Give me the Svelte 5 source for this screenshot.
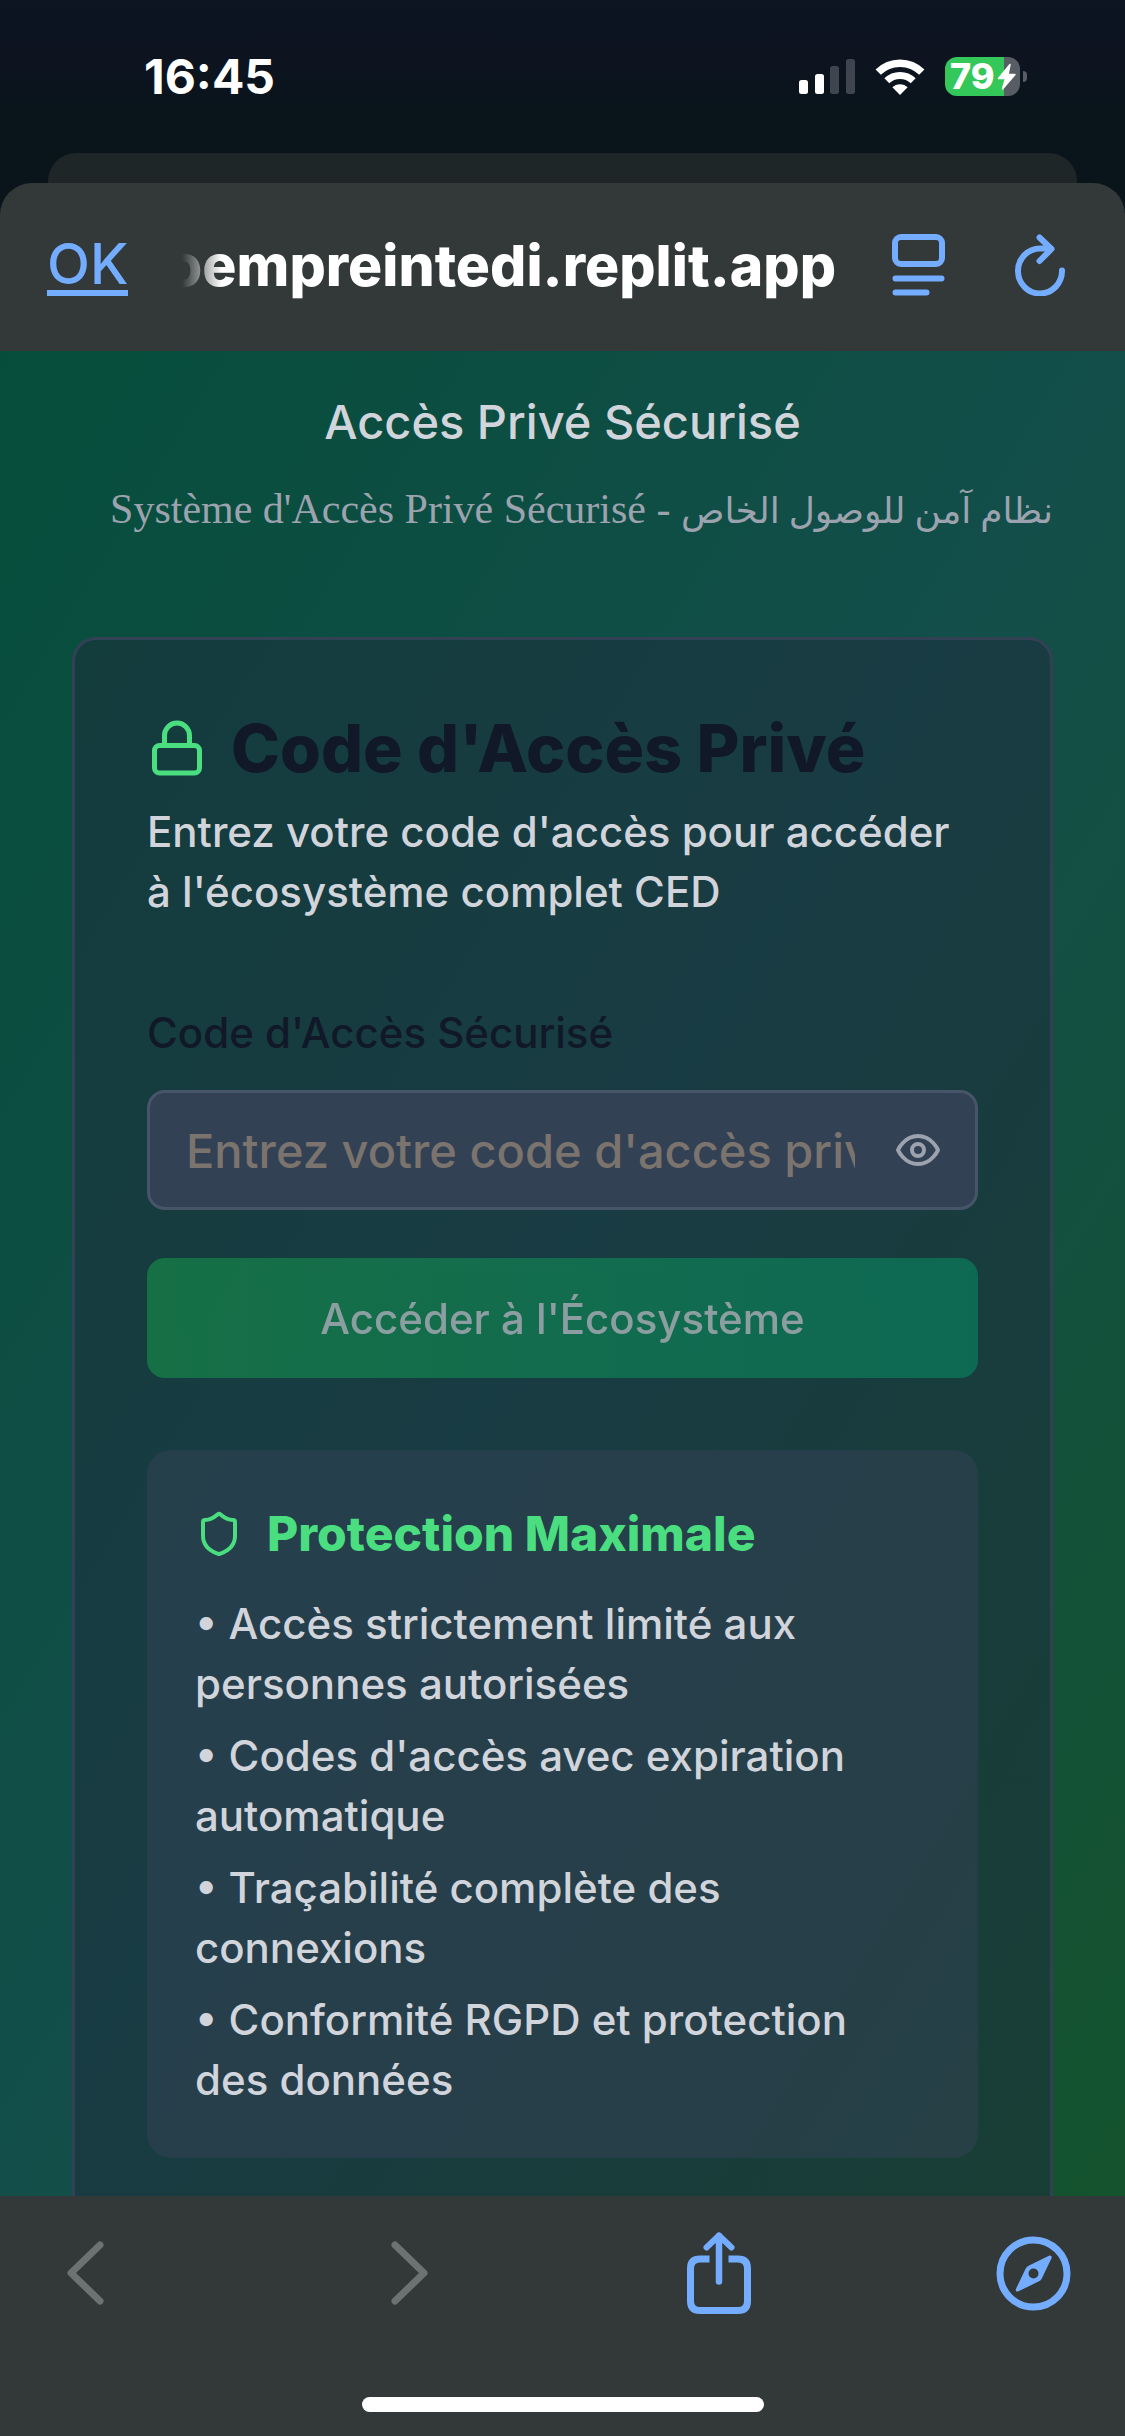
<script>
  const protections = [
    'Accès strictement limité aux personnes autorisées',
    "Codes d'accès avec expiration automatique",
    'Traçabilité complète des connexions',
    'Conformité RGPD et protection des données'
  ];

  let code = $state('');
  let visible = $state(true);
</script>

<div class="screen">
  <header class="status">
    <time class="clock">16:45</time>
    <div class="indicators">
      <svg class="signal" width="56" height="36" viewBox="0 0 56 36" aria-hidden="true">
        <rect x="0" y="21" width="9" height="14" rx="2.5" fill="#fff" />
        <rect x="16" y="15" width="9" height="20" rx="2.5" fill="#fff" />
        <rect x="31" y="7" width="9" height="28" rx="2.5" fill="#3f454e" />
        <rect x="47" y="0" width="9" height="35" rx="2.5" fill="#3f454e" />
      </svg>
      <svg class="wifi" width="50" height="36" viewBox="0 0 50 36" fill="none" aria-hidden="true">
        <path d="M3.2 13.2a31 31 0 0 1 43.6 0" stroke="#fff" stroke-width="7.5" />
        <path d="M11.8 21.8a18.8 18.8 0 0 1 26.4 0" stroke="#fff" stroke-width="7" />
        <path d="M25 36 17.4 28.3a10.8 10.8 0 0 1 15.2 0Z" fill="#fff" />
      </svg>
      <div class="battery">
        <span class="level">79</span>
        <svg class="bolt" width="20" height="28" viewBox="0 0 20 28" aria-hidden="true">
          <path d="M13 1.500 1.500 15.500H8.500L5.500 26 18 11.500H11Z" fill="#fff" stroke="#fff" stroke-width="1.500" stroke-linejoin="round" />
        </svg>
        <span class="nub"></span>
      </div>
    </div>
  </header>

  <div class="sheet-behind"></div>

  <div class="sheet">
    <nav class="address" aria-label="Barre d'adresse">
      <button class="ok" type="button">OK</button>
      <div class="url"><span>oempreintedi.replit.app</span></div>
      <button class="icon reader" type="button" aria-label="Format de page">
        <svg width="54" height="62" viewBox="0 0 54 62" fill="none" stroke="currentColor" stroke-width="6" stroke-linecap="round">
          <rect x="3" y="3" width="47" height="27" rx="6" />
          <path d="M3.500 44.500h46M3.500 58.500h31" />
        </svg>
      </button>
      <button class="icon" type="button" aria-label="Actualiser">
        <svg width="52" height="62" viewBox="0 0 52 62" fill="none" stroke="currentColor" stroke-width="6" stroke-linecap="round" stroke-linejoin="round">
          <path d="M48 36.500A22 22.500 0 1 1 26 14.500H36" />
          <path d="M25.500 3.500 37.500 15 25.500 27" />
        </svg>
      </button>
    </nav>

    <main class="page">
      <h1>Accès Privé Sécurisé</h1>
      <p class="bilingual" dir="rtl"><span class="arabic" lang="ar">نظام آمن للوصول الخاص</span> - Système d'Accès Privé Sécurisé</p>

      <section class="card">
        <div class="card-title">
          <svg width="60" height="60" viewBox="0 0 24 24" fill="none" stroke="currentColor" stroke-width="2" stroke-linecap="round" stroke-linejoin="round" aria-hidden="true">
            <rect x="3" y="11" width="18" height="11" rx="2" />
            <path d="M7 11V7a5 5 0 0 1 10 0v4" />
          </svg>
          <h2>Code d'Accès Privé</h2>
        </div>
        <p class="lead">Entrez votre code d'accès pour accéder à l'écosystème complet CED</p>

        <form onsubmit={(event) => event.preventDefault()}>
          <label for="code">Code d'Accès Sécurisé</label>
          <div class="field">
            <input id="code" type={visible ? 'text' : 'password'} placeholder="Entrez votre code d'accès privé" bind:value={code} />
            <button class="eye" type="button" aria-label="Afficher le code" onclick={() => (visible = !visible)}>
              <svg width="48" height="48" viewBox="0 0 24 24" fill="none" stroke="currentColor" stroke-width="2" stroke-linecap="round" stroke-linejoin="round">
                <path d="M2 12s3-7 10-7 10 7 10 7-3 7-10 7-10-7-10-7Z" />
                <circle cx="12" cy="12" r="3" />
              </svg>
            </button>
          </div>
          <button class="submit" type="submit" disabled={!code}>Accéder à l'Écosystème</button>
        </form>

        <section class="panel">
          <div class="panel-title">
            <svg width="48" height="48" viewBox="0 0 24 24" fill="none" stroke="currentColor" stroke-width="2" stroke-linecap="round" stroke-linejoin="round" aria-hidden="true">
              <path d="M20 13c0 5-3.500 7.500-7.660 8.950a1 1 0 0 1-.67-.01C7.500 20.500 4 18 4 13V6a1 1 0 0 1 1-1c2 0 4.500-1.200 6.240-2.720a1.170 1.170 0 0 1 1.520 0C14.510 3.810 17 5 19 5a1 1 0 0 1 1 1z" />
            </svg>
            <h3>Protection Maximale</h3>
          </div>
          <ul>
            {#each protections as item}
              <li>• {item}</li>
            {/each}
          </ul>
        </section>
      </section>
    </main>

    <footer class="toolbar">
      <div class="actions">
        <button class="icon dim" type="button" aria-label="Page précédente">
          <svg width="40" height="64" viewBox="0 0 40 64" fill="none" stroke="currentColor" stroke-width="7" stroke-linecap="round" stroke-linejoin="round">
            <path d="M34 4 5 32 34 60" />
          </svg>
        </button>
        <button class="icon dim" type="button" aria-label="Page suivante">
          <svg width="40" height="64" viewBox="0 0 40 64" fill="none" stroke="currentColor" stroke-width="7" stroke-linecap="round" stroke-linejoin="round">
            <path d="M5 4 34 32 5 60" />
          </svg>
        </button>
        <button class="icon" type="button" aria-label="Partager">
          <svg width="66" height="84" viewBox="0 0 66 84" fill="none" stroke="currentColor" stroke-width="7">
            <path d="M23.500 28H14Q4.500 28 4.500 37.500V70Q4.500 79.500 14 79.500H52Q61.500 79.500 61.500 70V37.500Q61.500 28 52 28H42.500" />
            <path d="M33 5V50.500" stroke-width="6.500" stroke-linecap="round" />
            <path d="M20.500 16.500 33 4.500 45.500 16.500" stroke-width="6" stroke-linecap="round" stroke-linejoin="round" />
          </svg>
        </button>
        <button class="icon" type="button" aria-label="Ouvrir dans Safari">
          <svg width="75" height="75" viewBox="0 0 75 75" fill="none">
            <circle cx="37.500" cy="37.500" r="33.500" stroke="currentColor" stroke-width="7" />
            <path fill="currentColor" fill-rule="evenodd" d="M53 19.700c1.700-.8 3.300.6 2.500 2.500L45.800 42.500a6 6 0 0 1-2.800 2.800L22.500 55.300c-1.900.8-3.400-.6-2.500-2.500L29.700 32.500a6 6 0 0 1 2.800-2.800ZM37.500 32.500a5 5 0 1 0 0 10 5 5 0 0 0 0-10Z" />
          </svg>
        </button>
      </div>
      <div class="home"></div>
    </footer>
  </div>
</div>

<style>
  :global(body) {
    margin: 0;
    background: #09141b;
  }

  .screen {
    display: flex;
    flex-direction: column;
    min-height: 100vh;
    background: linear-gradient(#0d1422, #0d1420 60px, #09141b 110px);
    font-family: Inter, 'Liberation Sans', sans-serif;
    font-weight: 500;
    color: #d1d5db;
  }

  h1,
  h2,
  h3,
  p,
  ul {
    margin: 0;
    padding: 0;
  }

  svg {
    display: block;
    flex: none;
  }

  button {
    padding: 0;
    border: 0;
    background: none;
    font: inherit;
  }

  .status {
    display: flex;
    align-items: center;
    justify-content: space-between;
    height: 153px;
    padding: 0 105px 0 144px;
    box-sizing: border-box;
  }

  .clock {
    font-size: 48px;
    font-weight: 700;
    color: #fff;
  }

  .indicators {
    display: flex;
    align-items: center;
    gap: 20px;
  }

  .battery {
    position: relative;
    display: flex;
    align-items: center;
    width: 75px;
    height: 39px;
    border-radius: 12px;
    background: linear-gradient(90deg, #34c759 59px, #575c65 59px);
    color: #fff;
  }

  .level {
    padding-left: 5px;
    font-size: 36px;
    font-weight: 800;
    line-height: 39px;
  }

  .bolt {
    position: absolute;
    left: 52px;
    top: 6px;
  }

  .nub {
    position: absolute;
    left: 78px;
    top: 14px;
    width: 4px;
    height: 11px;
    border-radius: 0 4px 4px 0;
    background: #575c65;
  }

  .sheet-behind {
    height: 30px;
    margin: 0 48px;
    border-radius: 28px 28px 0 0;
    background: #1f2628;
  }

  .sheet {
    display: flex;
    flex: 1;
    flex-direction: column;
    border-radius: 32px 32px 0 0;
    overflow: hidden;
    background: #333838;
  }

  .address {
    display: flex;
    align-items: center;
    height: 168px;
    padding: 0 59px 4px 47px;
    box-sizing: border-box;
  }

  .ok {
    margin-top: 4px;
    border-bottom: 6px solid #74adff;
    font-size: 56px;
    font-weight: 500;
    line-height: 52px;
    color: #74adff;
  }

  .url {
    display: flex;
    flex: 1;
    justify-content: flex-end;
    margin: 0 56px 0 54px;
    overflow: hidden;
    font-size: 57px;
    font-weight: 800;
    color: #fff;
    mask-image: linear-gradient(90deg, transparent, #000 40px);
  }

  .icon {
    color: #74adff;
  }

  .reader {
    margin-right: 68px;
  }

  .page {
    display: flex;
    flex: 1;
    flex-direction: column;
    padding: 35px 72px 0;
    background: linear-gradient(to bottom right, #064e3b, #134e4a, #14532d);
  }

  h1 {
    font-size: 47px;
    font-weight: 500;
    line-height: 72px;
    text-align: center;
  }

  .bilingual {
    height: 60px;
    margin-top: 21px;
    font-family: 'Liberation Serif', 'DejaVu Sans', serif;
    font-size: 42px;
    font-weight: 400;
    line-height: 60px;
    white-space: nowrap;
    color: #9ca3af;
  }

  .arabic {
    font-size: 36px;
    line-height: 36px;
  }

  .card {
    flex: 1;
    margin-top: 98px;
    padding: 72px 72px 38px;
    border: 3px solid #334155;
    border-bottom: 0;
    border-radius: 24px 24px 0 0;
    background: rgba(30, 41, 59, 0.5);
  }

  .card-title,
  .panel-title {
    display: flex;
    align-items: center;
    gap: 24px;
    color: #4ade80;
  }

  h2 {
    font-size: 66px;
    font-weight: 800;
    line-height: 72px;
    white-space: nowrap;
    color: #111827;
  }

  .lead {
    margin-top: 18px;
    font-size: 42px;
    line-height: 60px;
  }

  label {
    display: block;
    margin-top: 81px;
    font-size: 42px;
    line-height: 60px;
    color: #111827;
  }

  .field {
    display: flex;
    align-items: center;
    height: 120px;
    margin-top: 27px;
    padding: 0 33px 0 36px;
    box-sizing: border-box;
    border: 3px solid #475569;
    border-radius: 18px;
    background: #334155;
  }

  input {
    flex: 1;
    min-width: 0;
    margin-right: 39px;
    padding: 0;
    border: 0;
    outline: 0;
    background: none;
    font: inherit;
    font-size: 47px;
    color: #fff;
  }

  input::placeholder {
    color: #7b736d;
    opacity: 1;
  }

  .eye {
    color: #9ca3af;
  }

  .submit {
    display: block;
    width: 100%;
    height: 120px;
    margin-top: 48px;
    border-radius: 18px;
    background: linear-gradient(90deg, #16a34a, #059669);
    font-size: 42px;
    color: #fff;
  }

  .submit:disabled {
    opacity: 0.5;
  }

  .panel {
    margin-top: 72px;
    padding: 48px;
    border-radius: 24px;
    background: rgba(51, 65, 85, 0.5);
  }

  h3 {
    font-size: 48px;
    font-weight: 800;
    line-height: 72px;
    color: #4ade80;
  }

  ul {
    display: grid;
    gap: 12px;
    margin-top: 24px;
    padding-right: 24px;
    list-style: none;
    font-size: 42px;
    line-height: 60px;
  }

  .toolbar {
    display: flex;
    flex-direction: column;
    align-items: center;
    justify-content: space-between;
    height: 240px;
    padding: 35px 0 24px;
    box-sizing: border-box;
    background: #333838;
  }

  .actions {
    display: grid;
    grid-template-columns: 324fr 296fr 310fr auto;
    align-items: center;
    justify-items: start;
    width: 100%;
    padding: 0 54px 0 66px;
    box-sizing: border-box;
  }

  .dim {
    color: #6d7171;
  }

  .home {
    width: 402px;
    height: 15px;
    border-radius: 8px;
    background: #fff;
  }
</style>
